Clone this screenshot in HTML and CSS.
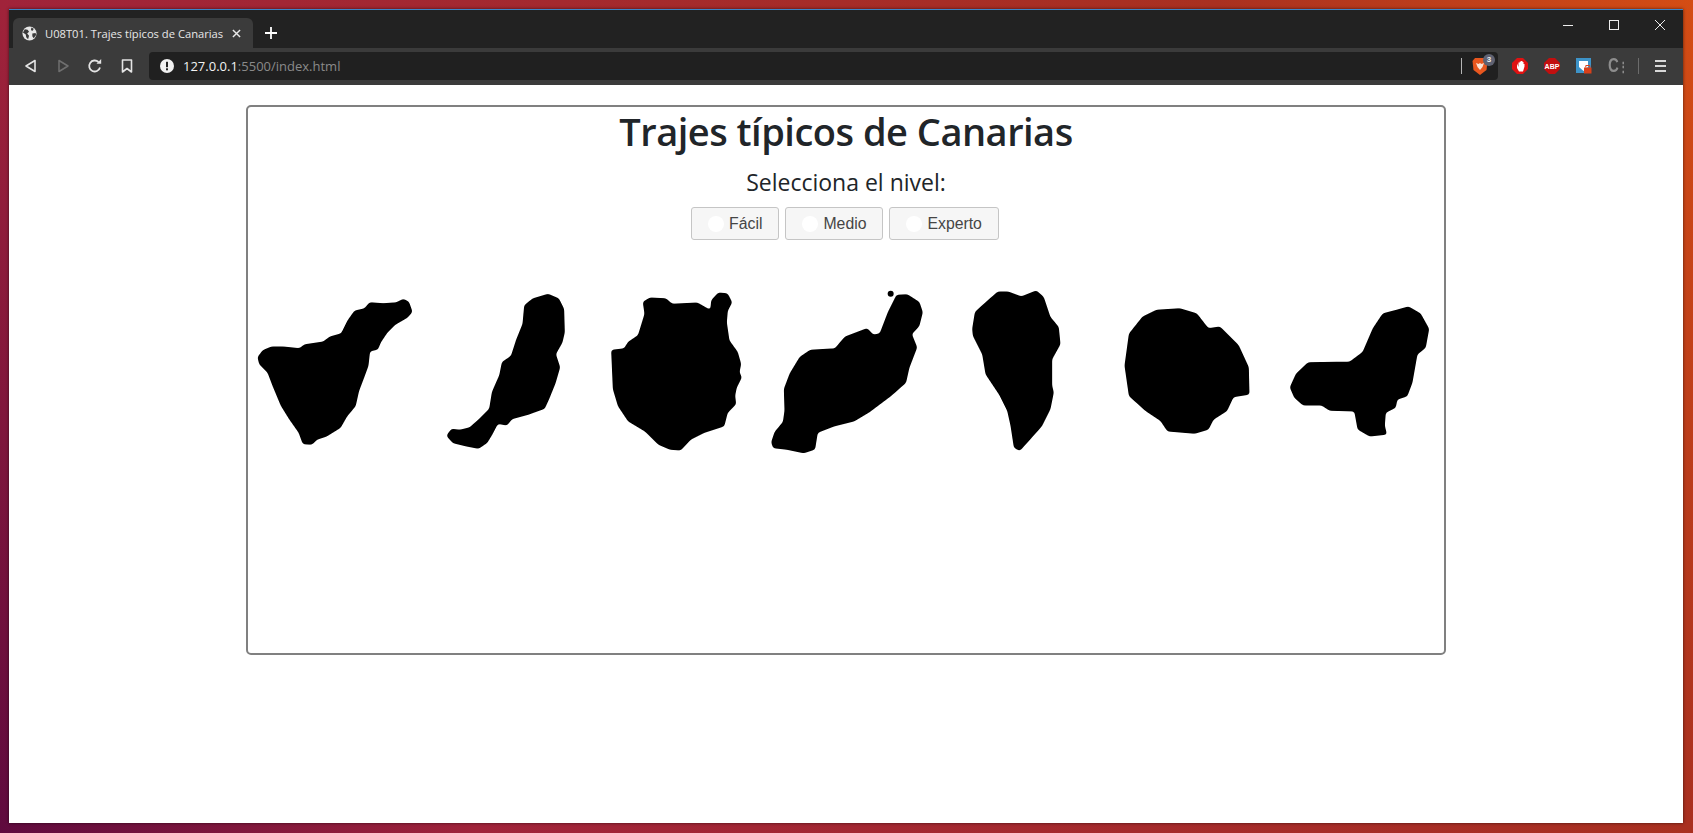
FILE: index.html
```html
<!DOCTYPE html>
<html lang="es">
<head>
  <meta charset="UTF-8" />
  <title>U08T01. Trajes típicos de Canarias</title>
  <link rel="stylesheet" href="styles.css">
</head>
<body>
  <!-- rounds off the traced island outlines -->
  <svg class="defs">
    <filter id="soft">
      <feGaussianBlur stdDeviation="5"/>
      <feComponentTransfer>
        <feFuncA type="linear" slope="4" intercept="-1.5"/>
      </feComponentTransfer>
    </filter>
  </svg>

  <div class="window">
    <!-- tab strip -->
    <div class="tabstrip">
      <div class="tab">
        <svg class="favicon" viewBox="0 0 16 16"><circle cx="8" cy="8" r="7.5" fill="#e8e8e8"/><path d="M3 3.500l3 .5 1.500 2-2 2 2 2.500-1 3.500-2-2-.5-3L1 7zM10 1.500l2.500 1.500-1 2-2-.5zM11 8l3.500-.5.5 2-2.500 3.500-1.500-2z" fill="#3a3a3a"/></svg>
        <span class="tab-title">U08T01. Trajes típicos de Canarias</span>
        <svg class="tab-close" viewBox="0 0 10 10"><path d="M1 1l8 8M9 1l-8 8" stroke="#e8e8e8" stroke-width="1.600"/></svg>
      </div>
      <svg class="new-tab" viewBox="0 0 12 12"><path d="M6 0v12M0 6h12" stroke="#fff" stroke-width="1.800"/></svg>
      <div class="win-controls">
        <svg viewBox="0 0 12 12"><path d="M1 6.500h10" stroke="#eee"/></svg>
        <svg viewBox="0 0 12 12"><rect x="1.500" y="1.500" width="9" height="9" fill="none" stroke="#eee"/></svg>
        <svg viewBox="0 0 12 12"><path d="M1 1l10 10M11 1l-10 10" stroke="#eee"/></svg>
      </div>
    </div>

    <!-- toolbar -->
    <div class="toolbar">
      <div class="nav-btns">
        <svg viewBox="0 0 16 16"><path d="M12 2.500v11L3 8z" fill="none" stroke="#e4e4e4" stroke-width="1.600" stroke-linejoin="round"/></svg>
        <svg viewBox="0 0 16 16"><path d="M4 2.500v11L13 8z" fill="none" stroke="#6f6f6f" stroke-width="1.500" stroke-linejoin="round"/></svg>
        <svg viewBox="0 0 16 16"><path d="M13 9.500A5.500 5.500 0 1 1 11.500 4" fill="none" stroke="#e4e4e4" stroke-width="1.800"/><path d="M9.500 5.800h4.700V1z" fill="#e4e4e4"/></svg>
        <svg viewBox="0 0 16 16"><path d="M3.500 2h9v12L8 10.500 3.500 14z" fill="none" stroke="#e4e4e4" stroke-width="1.600" stroke-linejoin="round"/></svg>
      </div>
      <div class="urlbar">
        <svg class="info-icon" viewBox="0 0 14 14"><circle cx="7" cy="7" r="7" fill="#f0f0f0"/><rect x="6" y="2.800" width="2" height="5.400" fill="#222"/><rect x="6" y="9.300" width="2" height="2" fill="#222"/></svg>
        <span class="url"><span class="url-host">127.0.0.1</span>:5500/index.html</span>
        <i class="sep"></i>
        <div class="brave">
          <svg viewBox="0 0 16 18"><path d="M3 1h10l2.500 3-1 9L8 18l-6.500-5-1-9z" fill="#e8571f"/><path d="M4 6l2.500 1L8 6l1.500 1L12 6l-1.500 4L8 13l-2.500-3z" fill="#fbe3d6"/></svg>
          <span class="badge">3</span>
        </div>
      </div>
      <div class="extensions">
        <svg viewBox="0 0 16 16"><path d="M5 0h6l5 5v6l-5 5H5l-5-5V5z" fill="#e01212"/><path d="M5 5.500v4.500l2 3.500h4l1.500-5V6h-1v2.500V4h-1v4V3H9v5V3.500H7.800V8V4.500H6.500V9z" fill="#fff"/></svg>
        <svg viewBox="0 0 16 16"><path d="M5 0h6l5 5v6l-5 5H5l-5-5V5z" fill="#c20f0f"/><text x="8" y="10.800" class="abp-text">ABP</text></svg>
        <svg viewBox="0 0 16 16"><rect width="15" height="15" fill="#3d93c8"/><path d="M3 3h9v6l-4.500 4L3 9z" fill="#fff"/><rect x="8" y="9.500" width="7.500" height="6" fill="#d8401a"/><path d="M9.800 9.500V7.500h4v2" fill="none" stroke="#d8401a"/></svg>
        <span class="ext-c">C<b>⋮</b></span>
        <i class="sep sep-dim"></i>
        <svg class="menu-icon" viewBox="0 0 16 16"><path d="M2 3h11M2 8h11M2 13h11" stroke="#d8d8d8" stroke-width="1.800"/></svg>
      </div>
    </div>

    <!-- page -->
    <div class="page">
      <main class="board">
        <h1>Trajes típicos de Canarias</h1>
        <h4>Selecciona el nivel:</h4>
        <div class="levels">
          <label class="level"><span class="radio"></span>Fácil</label>
          <label class="level"><span class="radio"></span>Medio</label>
          <label class="level"><span class="radio"></span>Experto</label>
        </div>

        <div class="islands">
          <svg viewBox="24 0 512.600 540"><path class="isla" d="M55 235L70 215 95 205 130 205 180 210 195 198 250 190 270 175 305 165 325 125 345 97 375 90 390 72 430 75 470 72 490 62 505 70 515 98 500 115 465 135 440 160 420 190 412 210 388 215 383 260 372 290 355 335 345 380 320 410 300 445 260 470 230 480 215 495 190 493 178 460 150 420 125 380 100 320 85 280 60 255Z"/></svg>
          <svg viewBox="537 0 512.600 540"><path class="isla" d="M622 470L635 452 660 455 690 447 720 420 750 390 758 340 770 312 780 290 788 250 815 232 830 185 850 135 855 80 880 60 925 47 955 60 970 90 972 160 965 190 945 225 958 265 945 310 925 360 912 388 870 403 815 418 800 437 772 432 755 465 740 490 715 507 680 500 640 490Z"/></svg>
          <svg viewBox="-1 0 512.600 540"><path class="isla" d="M160 70L180 58 225 60 245 77 320 73 362 97 365 65 385 43 410 45 423 70 410 95 407 130 415 185 440 220 450 255 445 280 452 295 437 325 432 350 435 375 410 400 400 440 340 460 300 480 270 512 240 510 205 495 165 455 115 425 85 380 70 330 65 215 103 210 115 190 145 170 165 105Z"/></svg>
          <svg viewBox="512 0 512.600 540"><path class="isla" d="M545 490L555 460 580 430 585 395 583 330 600 285 630 235 660 215 735 210 765 175 830 150 848 170 870 165 895 100 920 50 950 48 985 70 995 100 985 140 962 165 978 205 955 265 945 310 900 350 840 395 790 425 730 440 680 460 672 510 640 520 590 510 550 505Z"/><circle cx="901" cy="44" r="9"/></svg>
          <svg viewBox="-56 0 512.600 540"><path class="isla" d="M70 150L78 100 105 75 145 40 175 40 215 55 260 37 280 55 300 115 325 145 330 195 305 240 305 320 310 340 300 390 275 440 235 485 210 513 195 505 185 440 175 395 150 345 110 285 100 225 72 170Z"/></svg>
          <svg viewBox="457 0 512.600 540"><path class="isla" d="M540 165L580 115 620 95 690 90 740 105 775 150 810 145 865 200 895 265 897 345 850 352 830 395 790 420 775 450 735 462 655 455 635 425 590 395 540 350 527 260Z"/></svg>
          <svg viewBox="969 0 512.600 540"><path class="isla" d="M1022 325L1040 285 1075 252 1200 250 1240 220 1270 150 1300 105 1340 95 1375 85 1410 105 1435 150 1425 205 1400 225 1385 310 1370 350 1340 360 1335 385 1305 400 1302 440 1308 465 1260 470 1225 450 1215 395 1140 393 1115 377 1060 377 1035 355Z"/></svg>
        </div>
      </main>
    </div>
  </div>
</body>
</html>
```

FILE: styles.css
```css
* {
  box-sizing: border-box;
}
html, body {
  height: 100%;
}
body {
  margin: 0;
  padding: 9px 10px 10px 9px;
  overflow: hidden;
  background: linear-gradient(60deg, #5f0a3e, #a0233a 22%, #a93020 78%, #d44d14);
  font-family: "Open Sans", sans-serif;
}
.defs {
  position: absolute;
  width: 0;
  height: 0;
}
.window {
  height: 100%;
  display: flex;
  flex-direction: column;
  box-shadow: 0 0 3px rgba(0, 0, 0, 0.6);
}

/* browser chrome */
.tabstrip {
  height: 39px;
  padding: 8px 0 0 4px;
  display: flex;
  background: #222222;
  border-top: 1px solid #3d82c4;
}
.tab {
  width: 240px;
  height: 30px;
  padding: 0 9px;
  display: flex;
  align-items: center;
  background: #3b3b3b;
  border-radius: 6px 6px 0 0;
}
.favicon {
  width: 15px;
  height: 15px;
  margin-right: 8px;
}
.tab-title {
  flex: 1;
  font-size: 11.2px;
  color: #e8e8e8;
  white-space: nowrap;
}
.tab-close {
  width: 9px;
  height: 9px;
  margin-right: 3px;
}
.new-tab {
  width: 12px;
  height: 12px;
  margin: 9px 0 0 12px;
}
.win-controls {
  margin: -1px 0 0 auto;
  padding-right: 17px;
  display: flex;
  gap: 34px;
}
.win-controls svg {
  width: 12px;
  height: 12px;
  margin-top: 2px;
}
.toolbar {
  height: 37px;
  padding: 4px 0 5px;
  display: flex;
  align-items: center;
  background: #3b3b3b;
}
.nav-btns {
  width: 140px;
  padding-left: 14px;
  display: flex;
  gap: 16px;
}
.nav-btns svg {
  width: 16px;
  height: 16px;
}
.urlbar {
  width: 1349px;
  height: 28px;
  padding-left: 11px;
  display: flex;
  align-items: center;
  background: #202020;
  border-radius: 4px;
}
.info-icon {
  width: 14px;
  height: 14px;
  margin-right: 9px;
}
.url {
  flex: 1;
  font-size: 13px;
  color: #8a8a8a;
}
.url-host {
  color: #f2f2f2;
}
.sep {
  width: 1px;
  height: 16px;
  background: #b5b5b5;
}
.sep-dim {
  margin-left: -2px;
  background: #6c6c6c;
}
.brave {
  position: relative;
  width: 16px;
  height: 18px;
  margin: 0 10px 0 10px;
}
.brave svg {
  display: block;
}
.badge {
  position: absolute;
  left: 11px;
  top: -3px;
  width: 12px;
  height: 12px;
  border-radius: 50%;
  background: #5f6272;
  color: #eee;
  font: bold 8px/12px "Liberation Sans", sans-serif;
  text-align: center;
}
.extensions {
  flex: 1;
  padding-left: 14px;
  display: flex;
  align-items: center;
  gap: 16px;
}
.extensions svg {
  width: 16px;
  height: 16px;
}
.extensions .menu-icon {
  margin-left: -2px;
}
.abp-text {
  font: bold 7px "Liberation Sans", sans-serif;
  fill: #fff;
  text-anchor: middle;
}
.ext-c {
  width: 16px;
  font: bold 20px/18px "Liberation Sans", sans-serif;
  color: #8d8d8d;
  white-space: nowrap;
  letter-spacing: -1px;
  transform: scaleX(0.75);
  transform-origin: left center;
}
.ext-c b {
  font-size: 14px;
}

/* page */
.page {
  flex: 1;
  padding-top: 20px;
  background: #ffffff;
}
.board {
  width: 1200px;
  height: 550px;
  margin: 0 auto;
  border: 2px solid #808080;
  border-radius: 5px;
  text-align: center;
  color: #212529;
}
h1 {
  margin: 0;
  font-size: 38px;
  line-height: 48px;
  font-weight: 600;
  letter-spacing: -0.5px;
}
h4 {
  margin: 13px 0 0;
  font-size: 23px;
  line-height: 29px;
  font-weight: 400;
}
.levels {
  margin-top: 10px;
  padding-right: 2px;
  display: flex;
  justify-content: center;
  gap: 6px;
}
.level {
  height: 33px;
  padding: 0 16px;
  display: flex;
  align-items: center;
  background: #f6f6f6;
  border: 1px solid #c5c5c5;
  border-radius: 3px;
  font: 15.8px "Liberation Sans", sans-serif;
  color: #454545;
}
.radio {
  width: 16px;
  height: 16px;
  margin-right: 5px;
  background: #ffffff;
  border-radius: 50%;
}
.islands {
  margin-top: 39px;
  display: grid;
  grid-template-columns: repeat(7, 1fr);
}
.islands svg {
  width: 100%;
  height: 180px;
  display: block;
}
.isla {
  stroke: #000;
  stroke-width: 5;
  stroke-linejoin: round;
  filter: url(#soft);
}
```
